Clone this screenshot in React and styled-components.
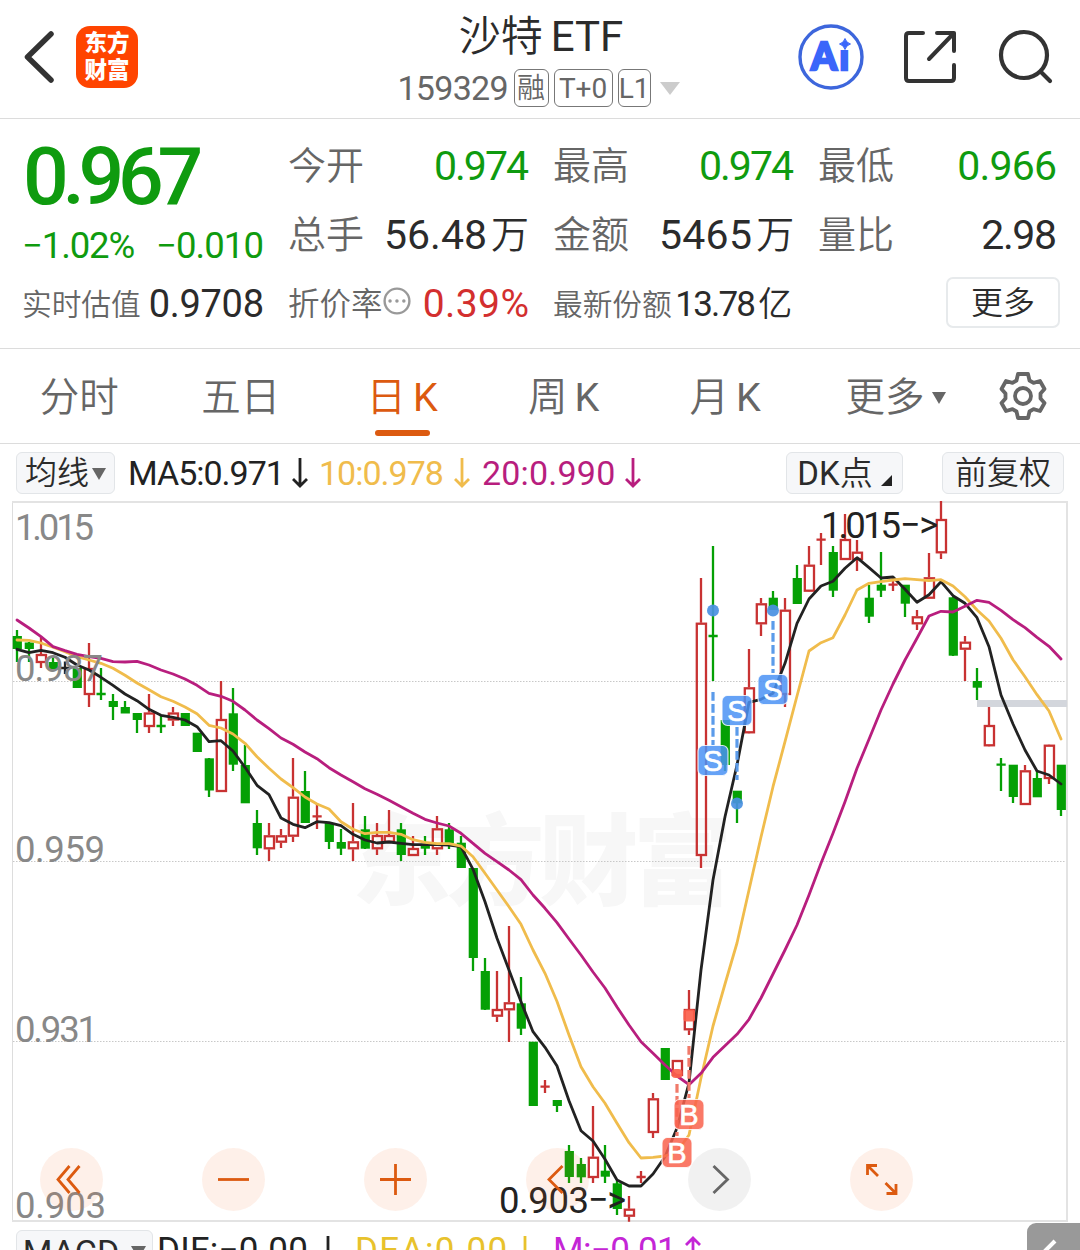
import React from 'react';
import styled, { createGlobalStyle, css } from 'styled-components';

const palette = {
  ink: '#2b2b2b',
  gray: '#666',
  axis: '#888',
  line: '#dcdcdc',
  green: '#0f9b0f',
  red: '#d32f2f',
  orange: '#dc5a10',
  yellow: '#f0bc4c',
  magenta: '#b81e7e',
};

const GlobalStyle = createGlobalStyle`
  body {
    margin: 0;
    background: #fff;
    overflow: hidden;
  }
  * {
    box-sizing: border-box;
  }
  svg {
    flex: none;
  }
`;

const fontStack = css`
  font-family: Roboto, 'Noto Sans CJK SC', sans-serif;
  line-height: 1.2;
`;

const Page = styled.div`
  ${fontStack}
  width: 1080px;
  height: 1250px;
  overflow: hidden;
  display: flex;
  flex-direction: column;
  color: ${palette.ink};
  font-weight: 400;
  white-space: nowrap;
`;

// the CJK text uses weight 350, latin letters beside it stay regular
const Latin = styled.span`
  font-weight: 400;
`;

/* header */

const Header = styled.header`
  height: 119px;
  flex: none;
  display: grid;
  grid-template-columns: 310px 1fr 310px;
  border-bottom: 1px solid ${palette.line};
`;

const HeaderSide = styled.div`
  display: flex;
  align-items: center;
  padding: 0 24px 5px;
  justify-content: ${(props) => (props.$end ? 'flex-end' : 'flex-start')};
  gap: ${(props) => (props.$end ? '36px' : '18px')};
`;

const Logo = styled.div`
  width: 62px;
  height: 62px;
  border-radius: 14px;
  background: #ff4400;
  color: #fff;
  font: 900 22.5px/27px 'Noto Sans CJK SC', sans-serif;
  text-align: center;
  padding-top: 2px;
`;

const TitleBlock = styled.div`
  display: flex;
  flex-direction: column;
  align-items: center;
`;

const Title = styled.div`
  height: 69px;
  line-height: 73px;
  font-size: 42px;
  font-weight: 350;
  display: flex;
  gap: 8px;
  padding-left: 2px;
`;

const SubTitle = styled.div`
  display: flex;
  align-items: center;
  height: 38px;
  gap: 5px;
  padding-right: 3px;
  color: ${palette.gray};
  font-size: 34px;
  & > svg {
    margin-left: 4px;
  }
`;

const Tag = styled.span`
  height: 38px;
  width: ${(props) => props.$width}px;
  border: 1px solid #777;
  border-radius: 6px;
  font-size: 28px;
  font-weight: ${(props) => props.$weight || 400};
  line-height: 37px;
  text-align: center;
`;

const Num = styled.span`
  letter-spacing: ${(props) => props.$ls || 0}px;
  margin-right: ${(props) => -(props.$ls || 0)}px;
`;

/* quote */

const Quote = styled.section`
  height: 230px;
  flex: none;
  display: grid;
  grid-template-columns: 242px 241px 241px 239px;
  column-gap: 24px;
  padding: 0 22px;
  border-bottom: 1px solid ${palette.line};
`;

const QuoteColumn = styled.div`
  display: grid;
  grid-template-rows: 69px 69px 69px;
  padding-top: 13px;
`;

const PriceColumn = styled.div`
  display: grid;
  grid-template-rows: 96px 43px 69px;
  padding-top: 12px;
`;

const Price = styled.div`
  color: ${palette.green};
  font-size: 80.5px;
  font-weight: 500;
  line-height: 91px;
  letter-spacing: -6.3px;
  padding-left: 1px;
`;

const Change = styled.div`
  display: flex;
  justify-content: space-between;
  color: ${palette.green};
  font-size: 36.5px;
  line-height: 37px;
`;

const Cell = styled.div`
  display: flex;
  align-items: center;
  justify-content: space-between;
`;

const Label = styled.span`
  color: ${palette.gray};
  font-size: ${(props) => props.$size || 38}px;
  font-weight: 350;
  display: flex;
  align-items: center;
  & > svg {
    margin-bottom: 6px;
  }
`;

const Value = styled.span`
  color: ${(props) => props.$color || palette.ink};
  font-size: ${(props) => props.$size || 41}px;
  letter-spacing: ${(props) => props.$ls || 0}px;
  margin-right: ${(props) => -(props.$ls || 0)}px;
  display: flex;
  align-items: center;
`;

const Unit = styled.span`
  font-size: ${(props) => props.$size || 38}px;
  font-weight: 350;
  margin-left: 4px;
  letter-spacing: 0;
`;

const MoreButton = styled.button`
  ${fontStack}
  width: 114px;
  height: 51px;
  margin: 0 -3px 5px auto;
  padding: 2px 0 0;
  border: 2px solid #e7eaec;
  border-radius: 7px;
  background: #fff;
  color: ${palette.ink};
  font-size: 32px;
  font-weight: 350;
`;

/* tabs */

const Tabs = styled.nav`
  height: 95px;
  flex: none;
  display: grid;
  grid-template-columns: repeat(5, 161.5px) 179px 1fr;
  border-bottom: 1px solid ${palette.line};
`;

const Tab = styled.div`
  display: flex;
  align-items: center;
  justify-content: center;
  gap: 7px;
  position: relative;
  color: ${(props) => (props.$active ? palette.orange : palette.gray)};
  font-size: 39.5px;
  font-weight: 350;
  padding-top: ${(props) => (props.$trim ? 0 : 3)}px;
  padding-right: ${(props) => props.$trim || 3}px;
  ${(props) =>
    props.$active &&
    css`
      &::after {
        content: '';
        position: absolute;
        left: 52px;
        bottom: 7px;
        width: 55px;
        height: 6px;
        border-radius: 3px;
        background: ${palette.orange};
      }
    `}
`;

/* indicator line above the chart */

const Indicators = styled.div`
  height: 57px;
  flex: none;
  display: flex;
  align-items: center;
  padding: 0 16px;
  font-size: 34px;
`;

const Chip = styled.div`
  width: ${(props) => props.$width}px;
  height: 42px;
  border: 1.5px solid #e2e5e8;
  border-radius: 6px;
  background: #f6f7f9;
  display: flex;
  align-items: center;
  justify-content: center;
  gap: ${(props) => props.$gap || 3}px;
  font-size: ${(props) => props.$size || 32}px;
  font-weight: ${(props) => props.$weight || 350};
  padding-top: 2px;
  margin-left: ${(props) => props.$left || 0}px;
`;

const Reading = styled.div`
  display: flex;
  align-items: center;
  justify-content: space-between;
  width: ${(props) => props.$width}px;
  margin-left: ${(props) => props.$left}px;
  padding-top: 1px;
  color: ${(props) => props.$color};
`;

const Spacer = styled.div`
  flex: 1;
`;

/* chart */

const ChartArea = styled.div`
  position: relative;
  height: 722px;
  flex: none;
  & > svg {
    display: block;
  }
`;

const Controls = styled.div`
  position: absolute;
  left: 40px;
  top: 647px;
  display: flex;
  gap: 99px;
`;

const RoundButton = styled.div`
  width: 63px;
  height: 63px;
  border-radius: 50%;
  background: ${(props) => (props.$muted ? 'rgba(0, 0, 0, 0.055)' : 'rgba(245, 110, 40, 0.1)')};
  color: ${(props) => (props.$muted ? palette.gray : palette.orange)};
`;

const Bottom = styled.div`
  height: 50px;
  margin-top: 7px;
  flex: none;
  display: flex;
  align-items: flex-start;
  padding-left: 16px;
  font-size: 35px;
  line-height: 40px;
`;

const CornerButton = styled.div`
  width: 53px;
  height: 50px;
  margin-top: -7px;
  border-radius: 9px 0 0 0;
  background: #999;
`;

const Triangle = ({ width, height, color }) => (
  <svg width={width} height={height} viewBox="0 0 10 10" preserveAspectRatio="none">
    <path d="M0 0H10L5 10Z" fill={color} />
  </svg>
);

const Arrow = ({ up }) => (
  <svg width="18" height="32" viewBox="0 0 18 32" fill="none" stroke="currentColor" strokeWidth="2.8">
    <path d={up ? 'M9 31V3M2 10L9 3L16 10' : 'M9 1V29M2 22L9 29L16 22'} />
  </svg>
);

// [high, low, body top, body bottom, kind] in chart pixels; body top === body bottom draws a cross
const candles = [
  [630, 662, 636, 649, 'g'], [642, 662, 642.5, 649, 'g'], [637, 668, 654, 663, 'r'], [656, 669, 662, 669, 'g'],
  [661.5, 674, 668, 668, 'k'], [668, 688, 668, 688, 'g'], [643, 707, 668, 695, 'r'], [668, 700, 694, 694, 'g'],
  [694, 720, 701, 707, 'g'], [701, 713, 707, 713.5, 'g'], [713, 733, 713, 720, 'g'], [694, 733, 712.5, 727, 'r'],
  [716, 733, 726, 726, 'g'], [707, 726, 712.5, 720.5, 'r'], [713, 726, 713, 726, 'g'], [733, 752, 732.7, 752, 'g'],
  [758, 797, 758.3, 790.5, 'g'], [681, 792, 719, 792, 'r'], [688, 771, 713.3, 764.7, 'g'], [745, 803, 765, 803.3, 'g'],
  [810, 855, 823, 848.3, 'g'], [823, 861, 835.3, 849.3, 'r'], [829, 848, 835.3, 842.7, 'r'], [758, 842, 796.7, 836.7, 'r'],
  [771, 823, 791, 823, 'g'], [803, 829, 816.3, 816.3, 'r'], [823, 849, 823, 842, 'g'], [829, 855, 842, 848.7, 'g'],
  [803, 861, 841.3, 849.3, 'r'], [816, 849, 829.3, 848.7, 'g'], [823, 855, 835, 849.3, 'r'], [810, 843, 835, 842.7, 'r'],
  [823, 861, 829.3, 855, 'g'], [836, 856, 848, 856, 'r'], [836, 855, 845, 848.7, 'g'], [816, 855, 828.3, 849.3, 'r'],
  [823, 849, 829.3, 843.3, 'g'], [836, 868, 842.7, 868, 'g'], [868, 971, 868, 958, 'g'], [958, 1010, 971, 1009.7, 'g'],
  [971, 1022, 1009, 1016.7, 'r'], [926, 1042, 1002.3, 1010.3, 'r'], [977, 1035, 1003.3, 1028.7, 'g'], [1042, 1106, 1041.7, 1106, 'g'],
  [1080, 1093, 1086.7, 1086.7, 'r'], [1100, 1112, 1100, 1106, 'g'], [1145, 1183, 1151, 1177, 'g'], [1158, 1183, 1164, 1177.3, 'g'],
  [1106, 1183, 1156.7, 1178, 'r'], [1145, 1183, 1170.7, 1176.7, 'g'], [1181, 1215, 1183.3, 1209, 'g'], [1196, 1221.7, 1208.7, 1216.7, 'r'],
  [1171, 1183, 1177, 1177, 'r'], [1093, 1138, 1098.3, 1133, 'r'], [1048, 1080, 1048, 1080, 'g'], [1060, 1076, 1060, 1076, 'r'],
  [990, 1035, 1009, 1030.3, 'r'], [578, 868, 622.7, 856, 'r'], [546, 681, 636, 636, 'g'], [720, 771, 720, 765, 'g'],
  [791, 823, 790.7, 803.3, 'g'], [649, 733, 687.3, 733.3, 'r'], [598, 636, 603.3, 624.3, 'r'], [591, 610, 597.7, 610, 'g'],
  [598, 707, 609.7, 695, 'r'], [565, 604, 578, 604, 'g'], [546, 592, 564.7, 591.7, 'r'], [533, 565, 539.7, 539.7, 'r'],
  [546, 597, 552, 590.7, 'g'], [514, 560, 539, 560, 'r'], [540, 571, 551.7, 560, 'r'], [585, 623, 597.7, 616.7, 'g'],
  [552, 597, 584.7, 590.7, 'g'], [578, 591, 584.7, 584.7, 'r'], [585, 617, 584.7, 603.7, 'g'], [610, 630, 616.3, 624.3, 'r'],
  [553, 599, 577.3, 598.7, 'r'], [501, 559, 519, 553.3, 'r'], [597, 656, 597.3, 655.7, 'g'], [636, 681, 641.7, 649.7, 'r'],
  [668, 700, 681, 687.7, 'g'], [707, 746, 725, 746.3, 'r'], [758, 791, 764.7, 764.7, 'g'], [765, 803, 764.7, 797, 'g'],
  [765, 805, 770.3, 805, 'r'], [771, 797, 778, 797.3, 'g'], [745, 784, 744.7, 779, 'r'], [765, 816, 764.7, 810, 'g'],
];

const ma5 = [
  649.3, 652.7, 650.3, 652.7, 657.3, 665, 670, 677.3, 685.3, 694, 700.7, 709.3, 715.3, 717.3, 720, 726.7, 741.7, 740.7,
  751, 767.3, 785.3, 794.7, 818, 824.3, 827.7, 821.7, 822.7, 825.7, 834.3, 840, 843, 842, 843.3, 844.7, 844.7, 844.7,
  845, 846.7, 869.3, 901.7, 938.3, 970, 1001.7, 1031.7, 1047.3, 1066, 1100.7, 1130.7, 1141, 1159.3, 1180, 1186, 1186,
  1174, 1156.7, 1128, 1083, 970, 880, 816.7, 765, 702.3, 699.3, 693.3, 663.3, 623.3, 599, 586, 581.3, 568.3, 557.7,
  567.7, 578, 577, 589.3, 602.3, 594.7, 581.7, 595.7, 603.3, 617.7, 646.7, 695, 724, 750, 771, 775, 784,
];

const ma10 = [
  640, 640.3, 643, 647.3, 651.7, 656.7, 660, 663.3, 668.3, 675.3, 683, 689.7, 696.7, 701.3, 707, 713.7, 725.3, 728, 734,
  743.3, 756.7, 768.3, 779, 787.7, 797, 804, 809, 821.7, 829.3, 833.7, 832.3, 832.3, 834.3, 839.7, 842.3, 843.7, 843.7,
  846, 856.7, 873.3, 890, 906.7, 924.3, 950, 973.3, 1001.5, 1035, 1066.7, 1086.7, 1103.3, 1123.3, 1142.7, 1158, 1157.3,
  1156, 1151.7, 1135, 1078, 1026, 984, 943, 890, 837, 786.7, 741.7, 696, 651, 642.7, 637.7, 615, 590, 583.3, 581.7, 580,
  578.7, 579.7, 580.7, 579.7, 586, 596.7, 610, 621, 638.3, 659.7, 676.7, 694.7, 711, 739,
];

const ma20 = [
  620, 628, 636.7, 646.7, 650.7, 654.3, 656.7, 658.3, 661.7, 662, 661.3, 665, 670, 674, 679, 685.3, 693.3, 696.3, 701.3,
  710, 720, 728.7, 738, 744.3, 752, 758.7, 767.7, 775, 781.7, 788.7, 794.3, 800.3, 806.7, 813.3, 819.3, 823, 826, 833.3,
  843.3, 853.3, 861.7, 870, 879.7, 895, 908.3, 922.7, 939, 955, 972, 988, 1007, 1025, 1041.7, 1053.3, 1065, 1076, 1084.7,
  1073.3, 1057.3, 1045.7, 1034.3, 1019.3, 998, 974, 950, 925, 895, 863.3, 833.3, 801.7, 768.3, 739.3, 710, 684, 660,
  638.3, 616, 611.3, 612, 606.3, 600.3, 602.3, 610.3, 619.7, 627.7, 637.3, 646.3, 659,
];

const candleColors = { g: '#05a005', r: '#c83232', k: '#222' };
const slotX = (i) => 17 + i * 12;
const toPoints = (values) => values.map((y, i) => `${slotX(i)},${y}`).join(' ');

const axisLabels = [
  ['1.015', 15, 540, 79],
  ['0.987', 15, 681, 88],
  ['0.959', 15, 861.5, 90],
  ['0.931', 15, 1041.5, 83],
  ['0.903', 15, 1218, 91],
];

const marks = [
  { x: 713, y: 760.5, text: 'S', line: [692, 745] },
  { x: 737, y: 710.5, text: 'S', line: [727, 780] },
  { x: 773, y: 689.5, text: 'S', line: [621, 673] },
  { x: 689, y: 1114.5, text: 'B', line: [1046, 1098] },
  { x: 677, y: 1152.5, text: 'B', line: [1084, 1136] },
];

const Candle = ({ x, data }) => {
  const [high, low, top, bottom, kind] = data;
  const color = candleColors[kind];
  if (top === bottom) {
    return <path d={`M${x} ${high}V${low}M${x - 4.5} ${top}H${x + 4.7}`} stroke={color} strokeWidth="2.3" />;
  }
  if (kind === 'g') {
    return (
      <g>
        <path d={`M${x} ${high}V${low}`} stroke={color} strokeWidth="2.3" />
        <rect x={x - 4.3} y={top} width="9.2" height={bottom - top} fill={color} />
      </g>
    );
  }
  return (
    <g stroke={color} strokeWidth="2.3" fill="none">
      <path d={`M${x} ${high}V${top}M${x} ${bottom}V${low}`} />
      <rect x={x - 4.2} y={top + 1} width="9.2" height={bottom - top - 2} />
    </g>
  );
};

const Chart = () => (
  <svg width="1080" height="722" viewBox="0 501 1080 722">
    <g fontFamily="'Noto Sans CJK SC', sans-serif" fontWeight="900" fontSize="99" fill="#f7f7f7">
      <text x="352" y="897" textLength="380">东方财富</text>
    </g>
    <g stroke="#c8c8c8" strokeDasharray="1.5 1.5">
      <path d="M13 681.5H1067M13 861.5H1067M13 1041.5H1067" />
    </g>
    <path d="M12.5 502V1221" stroke="#ddd" />
    <path d="M12 502H1067V1221H12" fill="none" stroke="#e3e3e3" strokeWidth="2" />
    <rect x="977" y="700" width="90" height="7" fill="#d3d6dc" />

    {candles.map((c, i) => (
      <Candle key={i} x={slotX(i)} data={c} />
    ))}

    <g fill="none" strokeWidth="2.8" strokeLinejoin="round" strokeLinecap="round">
      <polyline points={toPoints(ma5)} stroke="#222" />
      <polyline points={toPoints(ma10)} stroke={palette.yellow} />
      <polyline points={toPoints(ma20)} stroke={palette.magenta} />
    </g>

    {marks.map((m) => (
      <path
        key={`${m.x}-${m.y}`}
        d={`M${m.x} ${m.line[0]}V${m.line[1]}`}
        stroke={m.text === 'S' ? '#5b9bea' : '#f07a6a'}
        strokeWidth="3.2"
        strokeDasharray="8.7 3.3"
      />
    ))}
    <g fill="#4a90e2" fillOpacity="0.92">
      <circle cx="713" cy="610.5" r="6" />
      <circle cx="773" cy="610.5" r="6" />
      <circle cx="737" cy="803.5" r="6" />
    </g>
    <g fill="#fb5f4b" fillOpacity="0.92">
      <rect x="683.5" y="1009.5" width="11.5" height="12" rx="2.5" />
      <rect x="671.5" y="1069" width="11" height="9" rx="4" />
    </g>
    {marks.map((m) => (
      <g key={`${m.x}-${m.y}`}>
        <rect
          x={m.x - 15}
          y={m.y - 15}
          width="30"
          height="30"
          rx="5.5"
          fill={m.text === 'S' ? '#4a92f5' : '#f9624c'}
          fillOpacity="0.85"
          stroke="#fff"
          strokeOpacity="0.8"
          strokeWidth="1.2"
        />
        <text
          x={m.x}
          y={m.y + 10}
          textAnchor="middle"
          fontFamily="'Liberation Sans', sans-serif"
          fontSize="29"
          fill="#fff"
          stroke="#fff"
          strokeWidth="0.7"
        >
          {m.text}
        </text>
      </g>
    ))}

    <g fontFamily="Roboto, sans-serif" fontSize="36.5">
      {axisLabels.map(([text, x, y, length]) => (
        <text key={text} x={x} y={y} textLength={length} fill={palette.axis}>
          {text}
        </text>
      ))}
      <g fill="#222">
        <text x="821" y="538" textLength="80">1.015</text>
        <text x="499" y="1213" textLength="90">0.903</text>
      </g>
    </g>
    <g fontFamily="Roboto, sans-serif" fontSize="36" fill="#222">
      <text x="900" y="537" textLength="38">−&gt;</text>
      <text x="588" y="1212" textLength="38">−&gt;</text>
    </g>
  </svg>
);

const controls = [
  'M29.5 18L18 31.5L29.5 45M39.5 18L28 31.5L39.5 45',
  'M16 31.5H47',
  'M16 31.5H47M31.5 16V47',
  'M36.5 18L23 31.5L36.5 45',
  'M25.5 18L39.5 31.5L25.5 45',
  'M17.5 27V17.5H27M17.5 17.5L28 28M46 36V45.5H36.5M46 45.5L35.5 35',
];

const App = () => {
  return (
    <>
      <GlobalStyle />
      <Page>
        <Header>
          <HeaderSide>
            <svg width="34" height="56" viewBox="0 0 34 56" fill="none" stroke="#333" strokeWidth="5.5">
              <path d="M27 5L3.5 28L27 51" strokeLinecap="round" strokeLinejoin="round" />
            </svg>
            <Logo>
              东方
              <br />
              财富
            </Logo>
          </HeaderSide>
          <TitleBlock>
            <Title>
              <span>沙特</span>
              <Latin>ETF</Latin>
            </Title>
            <SubTitle>
              <Num $ls={-0.7}>159329</Num>
              <Tag $width={35} $weight={350}>融</Tag>
              <Tag $width={59}>T+0</Tag>
              <Tag $width={33}>L1</Tag>
              <Triangle width={20} height={13} color="#ccc" />
            </SubTitle>
          </TitleBlock>
          <HeaderSide $end>
            <svg width="66" height="66" viewBox="0 0 66 66">
              <circle cx="33" cy="33" r="31" fill="none" stroke="#3d66dc" strokeWidth="3.4" />
              <text
                x="13"
                y="45.5"
                fontFamily="Lato, sans-serif"
                fontWeight="900"
                fontSize="37"
                textLength="38"
                fill="#3a66fa"
                stroke="#3a66fa"
                strokeWidth="2.4"
              >
                Ai
              </text>
              <path d="M39 13H54V26H39Z" fill="#fff" />
              <path d="M47 14.5Q48.2 18.8 52.5 20Q48.2 21.2 47 25.5Q45.8 21.2 41.5 20Q45.8 18.8 47 14.5Z" fill="#3a66fa" stroke="#3a66fa" />
            </svg>
            <svg width="60" height="60" viewBox="900 27 60 60" fill="none" stroke="#333" strokeWidth="4">
              <path
                d="M923 33H909Q906 33 906 36V78Q906 81 909 81H951Q954 81 954 78V65M937 33H954V51M954 33L929 59"
                strokeLinecap="round"
                strokeLinejoin="round"
              />
            </svg>
            <svg width="60" height="60" viewBox="996 27 60 60" fill="none" stroke="#333" strokeWidth="4.2">
              <circle cx="1024" cy="55" r="23" />
              <path d="M1041 72L1050 81" strokeLinecap="round" />
            </svg>
          </HeaderSide>
        </Header>

        <Quote>
          <PriceColumn>
            <Price>0.967</Price>
            <Change>
              <Num $ls={-1.1}>−1.02%</Num>
              <Num $ls={-0.9}>−0.010</Num>
            </Change>
            <Cell>
              <Label $size={29.7}>实时估值</Label>
              <Value $size={38} $ls={-0.3}>0.9708</Value>
            </Cell>
          </PriceColumn>
          <QuoteColumn>
            <Cell>
              <Label>今开</Label>
              <Value $color={palette.green} $ls={-2}>0.974</Value>
            </Cell>
            <Cell>
              <Label>总手</Label>
              <Value>
                56.48<Unit>万</Unit>
              </Value>
            </Cell>
            <Cell>
              <Label $size={31.5}>
                折价率
                <svg width="28" height="28" viewBox="0 0 28 28" fill="none" stroke="#999" strokeWidth="2.4">
                  <circle cx="14" cy="14" r="12.4" />
                  <path d="M7 14H21" strokeDasharray="0.1 6.8" strokeLinecap="round" strokeWidth="3.4" />
                </svg>
              </Label>
              <Value $size={39} $color={palette.red} $ls={0.4}>0.39%</Value>
            </Cell>
          </QuoteColumn>
          <QuoteColumn>
            <Cell>
              <Label>最高</Label>
              <Value $color={palette.green} $ls={-2}>0.974</Value>
            </Cell>
            <Cell>
              <Label>金额</Label>
              <Value $ls={0.3}>
                5465<Unit>万</Unit>
              </Value>
            </Cell>
            <Cell>
              <Label $size={29.7}>最新份额</Label>
              <Value $size={35} $ls={-1.8}>
                13.78<Unit $size={34}>亿</Unit>
              </Value>
            </Cell>
          </QuoteColumn>
          <QuoteColumn>
            <Cell>
              <Label>最低</Label>
              <Value $color={palette.green} $ls={-0.8}>0.966</Value>
            </Cell>
            <Cell>
              <Label>量比</Label>
              <Value $ls={-1.4}>2.98</Value>
            </Cell>
            <Cell>
              <MoreButton>更多</MoreButton>
            </Cell>
          </QuoteColumn>
        </Quote>

        <Tabs>
          <Tab>分时</Tab>
          <Tab>五日</Tab>
          <Tab $active>
            <span>日</span>
            <Latin>K</Latin>
          </Tab>
          <Tab>
            <span>周</span>
            <Latin>K</Latin>
          </Tab>
          <Tab>
            <span>月</span>
            <Latin>K</Latin>
          </Tab>
          <Tab>
            更多
            <Triangle width={14} height={12} color={palette.gray} />
          </Tab>
          <Tab $trim={21}>
            <svg width="50" height="50" viewBox="-25 -25 50 50" fill="none" stroke={palette.gray} strokeWidth="3.8">
              <path
                d="M-5 -22H5L6.5 -15.5L10.5 -13.2L17 -15L21.5 -7L17.5 -2.5V2.5L21.5 7L17 15L10.5 13.2L6.5 15.5L5 22H-5L-6.5 15.5L-10.5 13.2L-17 15L-21.5 7L-17.5 2.5V-2.5L-21.5 -7L-17 -15L-10.5 -13.2L-6.5 -15.5Z"
                strokeLinejoin="round"
              />
              <circle r="8" />
            </svg>
          </Tab>
        </Tabs>

        <Indicators>
          <Chip $width={99}>
            均线
            <Triangle width={14} height={12} color={palette.gray} />
          </Chip>
          <Reading $left={13} $width={181} $color="#222">
            <Num $ls={-1}>MA5:0.971</Num>
            <Arrow />
          </Reading>
          <Reading $left={10} $width={152} $color={palette.yellow}>
            <Num $ls={-1}>10:0.978</Num>
            <Arrow />
          </Reading>
          <Reading $left={11} $width={160} $color={palette.magenta}>
            <Num $ls={0.2}>20:0.990</Num>
            <Arrow />
          </Reading>
          <Spacer />
          <Chip $width={117} $gap={8} $size={33}>
            <span>
              <Latin>DK</Latin>点
            </span>
            <svg width="11" height="26" viewBox="0 0 11 26">
              <path d="M11 14V25H0Z" fill="#222" />
            </svg>
          </Chip>
          <Chip $width={122} $left={39}>前复权</Chip>
        </Indicators>

        <ChartArea>
          <Chart />
          <Controls>
            {controls.map((d, i) => (
              <RoundButton key={d} $muted={i === 4}>
                <svg width="63" height="63" fill="none" stroke="currentColor" strokeWidth="2.8">
                  <path d={d} />
                </svg>
              </RoundButton>
            ))}
          </Controls>
        </ChartArea>

        <Bottom>
          <Chip $width={137} $gap={12} $size={34} $weight={400}>
            <Num $ls={0}>MACD</Num>
            <Triangle width={15} height={13} color={palette.gray} />
          </Chip>
          <Reading $left={4} $width={180} $color="#222">
            <Num $ls={0.3}>DIF:−0.00</Num>
            <Arrow />
          </Reading>
          <Reading $left={18} $width={179} $color="#e8c22c">
            <Num $ls={1.4}>DEA:0.00</Num>
            <Arrow />
          </Reading>
          <Reading $left={19} $width={149} $color="#c425d6">
            <Num $ls={-0.6}>M:−0.01</Num>
            <Arrow up />
          </Reading>
          <Spacer />
          <CornerButton>
            <svg width="53" height="27" fill="none" stroke="#fff" strokeWidth="4">
              <path d="M28 14L14 28" />
            </svg>
          </CornerButton>
        </Bottom>
      </Page>
    </>
  );
};

export default App;
